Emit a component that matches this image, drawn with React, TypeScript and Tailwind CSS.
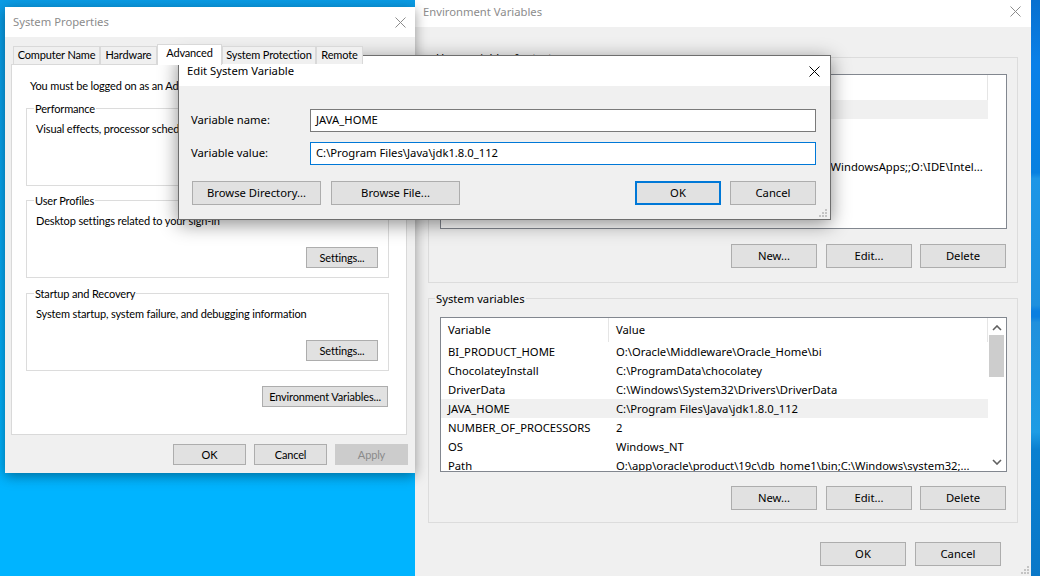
import type { ReactNode } from 'react';

function CloseIcon({ className }: { className: string }) {
  return (
    <svg width="11" height="11" viewBox="0 0 11 11" className={className}>
      <path d="M0.5 0.5L10.5 10.5M10.5 0.5L0.5 10.5" stroke="currentColor" strokeWidth="1" fill="none" />
    </svg>
  );
}

function Grip() {
  return (
    <svg width="8" height="8" viewBox="0 0 8 8" className="text-[#c4c4c4]">
      <g fill="currentColor">
        <rect x="6" y="0" width="2" height="2" />
        <rect x="3" y="3" width="2" height="2" />
        <rect x="6" y="3" width="2" height="2" />
        <rect x="0" y="6" width="2" height="2" />
        <rect x="3" y="6" width="2" height="2" />
        <rect x="6" y="6" width="2" height="2" />
      </g>
    </svg>
  );
}

function Btn({ label, className = 'w-[86px] h-6', disabled, primary }: { label: string; className?: string; disabled?: boolean; primary?: boolean }) {
  let look = 'bg-[#e1e1e1] border border-[#adadad] text-black';
  if (disabled) look = 'bg-[#cccccc] border border-[#cccccc] text-[#8a8a8a]';
  if (primary) look = 'bg-[#e1e1e1] border-2 border-[#0078d7] text-black';
  return (
    <button className={`${className} ${look} shrink-0 flex items-center justify-center leading-none whitespace-nowrap`}>
      {label}
    </button>
  );
}

function GroupBox({ title, className, legendClass = 'left-[6px]', children }: { title: string; className: string; legendClass?: string; children: ReactNode }) {
  return (
    <div className={`relative border border-[#dcdcdc] ${className}`}>
      <span className={`absolute -top-[8px] px-[1px] bg-inherit leading-4 whitespace-nowrap ${legendClass}`}>{title}</span>
      {children}
    </div>
  );
}

type Row = { name: string; value: string };

function VarList({ rows, selected, thumb, headerClass }: { rows: Row[]; selected: number; thumb: boolean; headerClass: string }) {
  return (
    <div className="w-[567px] h-[155px] border border-[#82878f] bg-white flex overflow-hidden">
      <div className="w-[547px] shrink-0">
        <div className={`flex ${headerClass}`}>
          <div className="w-[168px] pl-[7px] flex items-center border-r border-[#e5e5e5]">Variable</div>
          <div className="flex-1 pl-[7px] flex items-center border-r border-[#e5e5e5]">Value</div>
        </div>
        {rows.map((row, i) => (
          <div key={row.name} className={`flex h-[19px] pt-px items-center ${i === selected ? 'bg-[#f0f0f0]' : ''}`}>
            <div className="w-[168px] pl-[7px] whitespace-nowrap">{row.name}</div>
            <div className="flex-1 pl-[7px] whitespace-nowrap overflow-hidden">{row.value}</div>
          </div>
        ))}
      </div>
      {thumb && (
        <div className="w-[18px] flex flex-col items-center justify-between pt-[7px] pb-[6px] relative">
          <svg width="10" height="6" viewBox="0 0 10 6" className="text-[#606060]">
            <path d="M1 5L5 1L9 5" stroke="currentColor" strokeWidth="1.6" fill="none" />
          </svg>
          <div className="absolute left-[1px] top-[17px] w-[15px] h-[42px] bg-[#cdcdcd]" />
          <svg width="10" height="6" viewBox="0 0 10 6" className="text-[#606060]">
            <path d="M1 1L5 5L9 1" stroke="currentColor" strokeWidth="1.6" fill="none" />
          </svg>
        </div>
      )}
    </div>
  );
}

const userRows: Row[] = [
  { name: 'ChocolateyLastPathUpdate', value: '132494750483213312' },
  { name: 'OneDrive', value: 'C:\\Users\\test\\OneDrive' },
  { name: 'OneDriveConsumer', value: 'C:\\Users\\test\\OneDrive' },
  { name: 'Path', value: 'C:\\Users\\test2\\AppData\\Local\\Microsoft\\WindowsApps;;O:\\IDE\\Intel...' },
  { name: 'TEMP', value: 'C:\\Users\\test\\AppData\\Local\\Temp' },
  { name: 'TMP', value: 'C:\\Users\\test\\AppData\\Local\\Temp' },
];

const systemRows: Row[] = [
  { name: 'BI_PRODUCT_HOME', value: 'O:\\Oracle\\Middleware\\Oracle_Home\\bi' },
  { name: 'ChocolateyInstall', value: 'C:\\ProgramData\\chocolatey' },
  { name: 'DriverData', value: 'C:\\Windows\\System32\\Drivers\\DriverData' },
  { name: 'JAVA_HOME', value: 'C:\\Program Files\\Java\\jdk1.8.0_112' },
  { name: 'NUMBER_OF_PROCESSORS', value: '2' },
  { name: 'OS', value: 'Windows_NT' },
  { name: 'Path', value: 'O:\\app\\oracle\\product\\19c\\db_home1\\bin;C:\\Windows\\system32;...' },
];

function VarButtons({ className }: { className: string }) {
  return (
    <div className={`flex justify-end pr-[11px] ${className}`}>
      <Btn label="New..." />
      <Btn label="Edit..." className="w-[86px] h-6 ml-[9px]" />
      <Btn label="Delete" className="w-[86px] h-6 ml-[8px]" />
    </div>
  );
}

function EnvironmentWindow() {
  return (
    <div className="absolute left-[415px] top-0 w-[616px] h-[576px] bg-[#f0f0f0] flex flex-col">
      <div className="h-[27px] shrink-0 bg-white flex items-center justify-between pl-2 pr-[10px]">
        <span className="text-[#8c8c8c] -mt-[2px]">Environment Variables</span>
        <CloseIcon className="text-[#8c8c8c] -mt-[5px]" />
      </div>
      <div className="relative flex-1 pt-[30px] pl-[13px]">
        <GroupBox title="User variables for test" className="w-[590px] h-[226px] pt-[16px] pl-[11px] bg-[#f0f0f0]">
          <VarList rows={userRows} selected={0} thumb={false} headerClass="h-[25px]" />
          <VarButtons className="mt-[15px]" />
        </GroupBox>
        <GroupBox title="System variables" className="w-[590px] h-[225px] mt-[15px] pt-[18px] pl-[11px] bg-[#f0f0f0]">
          <VarList rows={systemRows} selected={3} thumb headerClass="h-[24px]" />
          <VarButtons className="mt-[14px]" />
        </GroupBox>
        <div className="flex justify-end gap-[9px] w-[573px] mt-[19px]">
          <Btn label="OK" />
          <Btn label="Cancel" />
        </div>
        <div className="absolute right-[2px] bottom-[2px]">
          <Grip />
        </div>
      </div>
    </div>
  );
}

function SettingsGroup({ title, text }: { title: string; text: string }) {
  return (
    <GroupBox title={title} legendClass="left-[7px]" className="w-[363px] h-[78px] pt-[12px] pl-[9px] pr-[10px] pb-[9px] bg-white flex flex-col justify-between">
      <p className="leading-4 whitespace-nowrap">{text}</p>
      <div className="flex justify-end">
        <Btn label="Settings..." className="w-[72px] h-[21px]" />
      </div>
    </GroupBox>
  );
}

function SystemPropertiesWindow() {
  const tabs = ['Computer Name', 'Hardware', 'Advanced', 'System Protection', 'Remote'];
  const widths = ['w-[87px]', 'w-[57px]', 'w-[65px]', 'w-[94px]', 'w-[47px]'];
  return (
    <div className="absolute left-[5px] top-[7px] w-[410px] h-[466px] bg-[#f0f0f0] flex flex-col shadow-[0_3px_12px_rgba(0,0,0,0.4)]">
      <div className="h-[30px] shrink-0 bg-white flex items-center justify-between pl-2 pr-[9px]">
        <span className="text-[#8c8c8c]">System Properties</span>
        <CloseIcon className="text-[#8c8c8c]" />
      </div>
      <div className="flex-1 pl-[6px] text-[11px] tracking-[-0.15px] font-['Lato',sans-serif]">
        <div className="flex items-end h-[21px] mt-[7px] pl-[2px] relative z-10">
          {tabs.map((tab, i) =>
            i === 2 ? (
              <div key={tab} className={`${widths[i]} h-[21px] pb-[3px] bg-white border border-b-0 border-[#d9d9d9] flex items-center justify-center whitespace-nowrap`}>
                {tab}
              </div>
            ) : (
              <div key={tab} className={`${widths[i]} h-[18px] mb-px bg-[#f0f0f0] border border-b-0 border-[#d9d9d9] flex items-center justify-center whitespace-nowrap`}>
                {tab}
              </div>
            ),
          )}
        </div>
        <div className="w-[396px] h-[371px] -mt-px bg-white border border-[#d9d9d9] pl-[14px] pt-[13px]">
          <p className="leading-4 ml-[4px] whitespace-nowrap">You must be logged on as an Administrator to make most of these changes.</p>
          <div className="mt-[14px] flex flex-col">
            <SettingsGroup title="Performance" text="Visual effects, processor scheduling, memory usage, and virtual memory" />
            <div className="h-[14px]" />
            <SettingsGroup title="User Profiles" text="Desktop settings related to your sign-in" />
            <div className="h-[15px]" />
            <SettingsGroup title="Startup and Recovery" text="System startup, system failure, and debugging information" />
          </div>
          <div className="flex justify-end w-[362px] mt-[15px]">
            <Btn label="Environment Variables..." className="w-[126px] h-[21px]" />
          </div>
        </div>
        <div className="flex justify-end gap-[8px] w-[397px] mt-[9px]">
          <Btn label="OK" className="w-[73px] h-[21px]" />
          <Btn label="Cancel" className="w-[73px] h-[21px]" />
          <Btn label="Apply" className="w-[73px] h-[21px]" disabled />
        </div>
      </div>
    </div>
  );
}

function EditDialog() {
  return (
    <div className="absolute left-[178px] top-[55px] w-[653px] h-[165px] bg-[#f0f0f0] border border-[#6e6e6e] flex flex-col shadow-[0_4px_18px_rgba(0,0,0,0.45)]">
      <div className="h-[30px] shrink-0 bg-white flex items-center justify-between pl-2 pr-[10px]">
        <span>Edit System Variable</span>
        <CloseIcon className="text-black" />
      </div>
      <div className="relative flex-1 pt-[23px] pl-[12px] pr-[14px]">
        <div className="flex items-center">
          <label className="w-[119px]">Variable name:</label>
          <div className="w-[506px] h-[23px] bg-white border border-[#7a7a7a] flex items-center pl-[5px]">JAVA_HOME</div>
        </div>
        <div className="flex items-center mt-[10px]">
          <label className="w-[119px]">Variable value:</label>
          <div className="w-[506px] h-[23px] bg-white border border-[#0078d7] flex items-center pl-[5px]">C:\Program Files\Java\jdk1.8.0_112</div>
        </div>
        <div className="flex mt-[16px] pl-px">
          <Btn label="Browse Directory..." className="w-[129px] h-6" />
          <Btn label="Browse File..." className="w-[129px] h-6 ml-[10px]" />
          <div className="flex-1" />
          <Btn label="OK" primary />
          <Btn label="Cancel" className="w-[86px] h-6 ml-[9px]" />
        </div>
        <div className="absolute right-[3px] bottom-[2px]">
          <Grip />
        </div>
      </div>
    </div>
  );
}

export default function App() {
  return (
    <div className="relative w-[1040px] h-[576px] overflow-hidden text-[11.25px] text-black font-['Noto_Sans',sans-serif] bg-[linear-gradient(180deg,#0870cf_0%,#0a80e8_11%,#0880e0_30%,#1e96e6_31%,#1e90de_53%,#0a7fe0_54%,#0a7fe0_55%,#2090dc_56%,#1e9ce4_75%,#0a80d0_78%,#0a78c8_100%)]">
      <div className="absolute left-0 top-0 w-[415px] h-[576px] bg-[linear-gradient(180deg,#0a9ce6_0%,#00b4ff_85%,#00b4ff_100%)]" />
      <EnvironmentWindow />
      <SystemPropertiesWindow />
      <EditDialog />
    </div>
  );
}
